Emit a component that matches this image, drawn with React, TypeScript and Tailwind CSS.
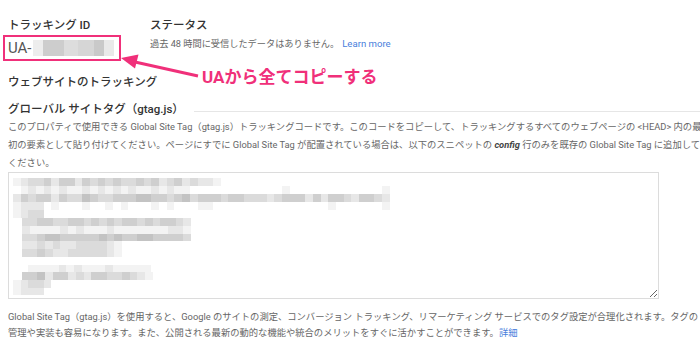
import React from "react";

const FONT = "font-['Roboto','Noto_Sans_CJK_JP',sans-serif]";

const SHADE: Record<string, string> = {
  "0": "bg-transparent",
  "1": "bg-[#f3f3f3]",
  "2": "bg-[#e7e7e7]",
  "3": "bg-[#dbdbdb]",
  "4": "bg-[#cfcfcf]",
  "5": "bg-[#c3c3c3]",
};

// blurred snippet rows: height, left indent, shade per 7.7px cell
const rows: { h: string; ml: string; cells: string }[] = [
  { h: "h-[8px]", ml: "ml-[4px]", cells: "123342442434343343423423221" },
  { h: "h-[8px]", ml: "ml-[4px]", cells: "012121211212121211212110000000000001000000000000100" },
  { h: "h-[8px]", ml: "ml-[4px]", cells: "2434424335433444554434534443443332344424244324432" },
  { h: "h-[8px]", ml: "ml-[4px]", cells: "1222010001001010001010001100000000000000010000001" },
  { h: "h-[8px]", ml: "ml-[4px]", cells: "12330" },
  { h: "h-[8px]", ml: "ml-[13px]", cells: "3344334434343443434432" },
  { h: "h-[8px]", ml: "ml-[13px]", cells: "2111121211121111111221" },
  { h: "h-[7px]", ml: "ml-[13px]", cells: "3345544444545445544443" },
  { h: "h-[8px]", ml: "ml-[13px]", cells: "2232322333321" },
  { h: "h-[8px]", ml: "ml-[13px]", cells: "3343223333321" },
  { h: "h-[8px]", ml: "ml-[13px]", cells: "" },
  { h: "h-[7px]", ml: "ml-[19px]", cells: "1111212111211111" },
  { h: "h-[8px]", ml: "ml-[13px]", cells: "44524423244334321" },
  { h: "h-[8px]", ml: "ml-[4px]", cells: "12332" },
  { h: "h-[7px]", ml: "ml-[4px]", cells: "1222" },
];

function Mosaic() {
  return (
    <div className="flex flex-col pt-[5px]">
      {rows.map((r, i) => (
        <div key={i} className={`flex ${r.h} ${r.ml}`}>
          {r.cells.split("").map((c, j) => (
            <div key={j} className={`w-[7.7px] h-full ${SHADE[c]}`} />
          ))}
        </div>
      ))}
    </div>
  );
}

export default function App() {
  return (
    <div className={`relative w-[700px] h-[349px] overflow-hidden bg-white pl-2 pt-[16px] text-[#666] ${FONT}`}>
      {/* top: tracking id + status */}
      <div className="flex">
        <div className="w-[142px] shrink-0">
          <div className="text-[11.5px] leading-[18px] font-medium text-[#333]">トラッキング ID</div>
          <div className="-ml-[5px] mt-[1px] w-[118px] h-[26px] border-2 border-[#f0307a] flex items-center pl-[3px]">
            <span className="text-[15px] leading-none text-[#555]">UA-</span>
            <div className="flex h-[16px] ml-[1px]">
              <div className="w-[10px] bg-[#ededed]" />
              <div className="w-[21px] bg-[#cdcdcd]" />
              <div className="w-[14px] bg-[#dddddd]" />
              <div className="w-[16px] bg-[#d6d6d6]" />
              <div className="w-[10px] bg-[#c9c9c9]" />
              <div className="w-[10px] bg-[#e9e9e9]" />
            </div>
          </div>
        </div>
        <div>
          <div className="text-[11.5px] leading-[18px] font-medium text-[#333]">ステータス</div>
          <div className="mt-[2px] text-[9.2px] leading-[16px] whitespace-nowrap">
            過去 48 時間に受信したデータはありません。
            <span className="ml-[3px] text-[9.6px] text-[#4a80dc]">Learn more</span>
          </div>
        </div>
      </div>

      <div className="mt-[12px] text-[11.5px] leading-[18px] font-medium text-[#333]">ウェブサイトのトラッキング</div>

      <div className="mt-[9px] flex items-center">
        <div className="text-[11.5px] leading-[18px] font-medium text-[#333] whitespace-nowrap">
          グローバル サイトタグ（gtag.js）
        </div>
        <div className="flex-1 h-px bg-[#e6e6e6] ml-[10px] mt-[4px]" />
      </div>

      <p className="text-[9.3px] leading-[18px] whitespace-nowrap">
        このプロパティで使用できる Global Site Tag（gtag.js）トラッキングコードです。このコードをコピーして、トラッキングするすべてのウェブページの &lt;HEAD&gt; 内の最
        <br />
        初の要素として貼り付けてください。ページにすでに Global Site Tag が配置されている場合は、以下のスニペットの{" "}
        <b className="italic text-[#444]">config</b> 行のみを既存の Global Site Tag に追加して
        <br />
        ください。
      </p>

      <div className="w-[651px] h-[127px] border border-[#dcdcdc] resize overflow-auto">
        <Mosaic />
      </div>

      <p className="mt-[10px] text-[9.3px] leading-[16px] whitespace-nowrap">
        Global Site Tag（gtag.js）を使用すると、Google のサイトの測定、コンバージョン トラッキング、リマーケティング サービスでのタグ設定が合理化されます。タグの
        <br />
        管理や実装も容易になります。また、公開される最新の動的な機能や統合のメリットをすぐに活かすことができます。
        <span className="text-[#4a80dc]">詳細</span>
      </p>

      {/* annotation */}
      <svg
        className="absolute left-[115px] top-[45px] pointer-events-none"
        width="90"
        height="40"
        viewBox="115 45 90 40"
      >
        <line x1="135" y1="62" x2="198" y2="76" stroke="#f0307a" strokeWidth="3" />
        <polygon points="121,58 138.5,54.5 135,68.5" fill="#f0307a" />
      </svg>
      <div className="absolute left-[202px] top-[66px] text-[17px] leading-[22px] font-bold text-[#f0307a] whitespace-nowrap">
        UAから全てコピーする
      </div>
    </div>
  );
}
